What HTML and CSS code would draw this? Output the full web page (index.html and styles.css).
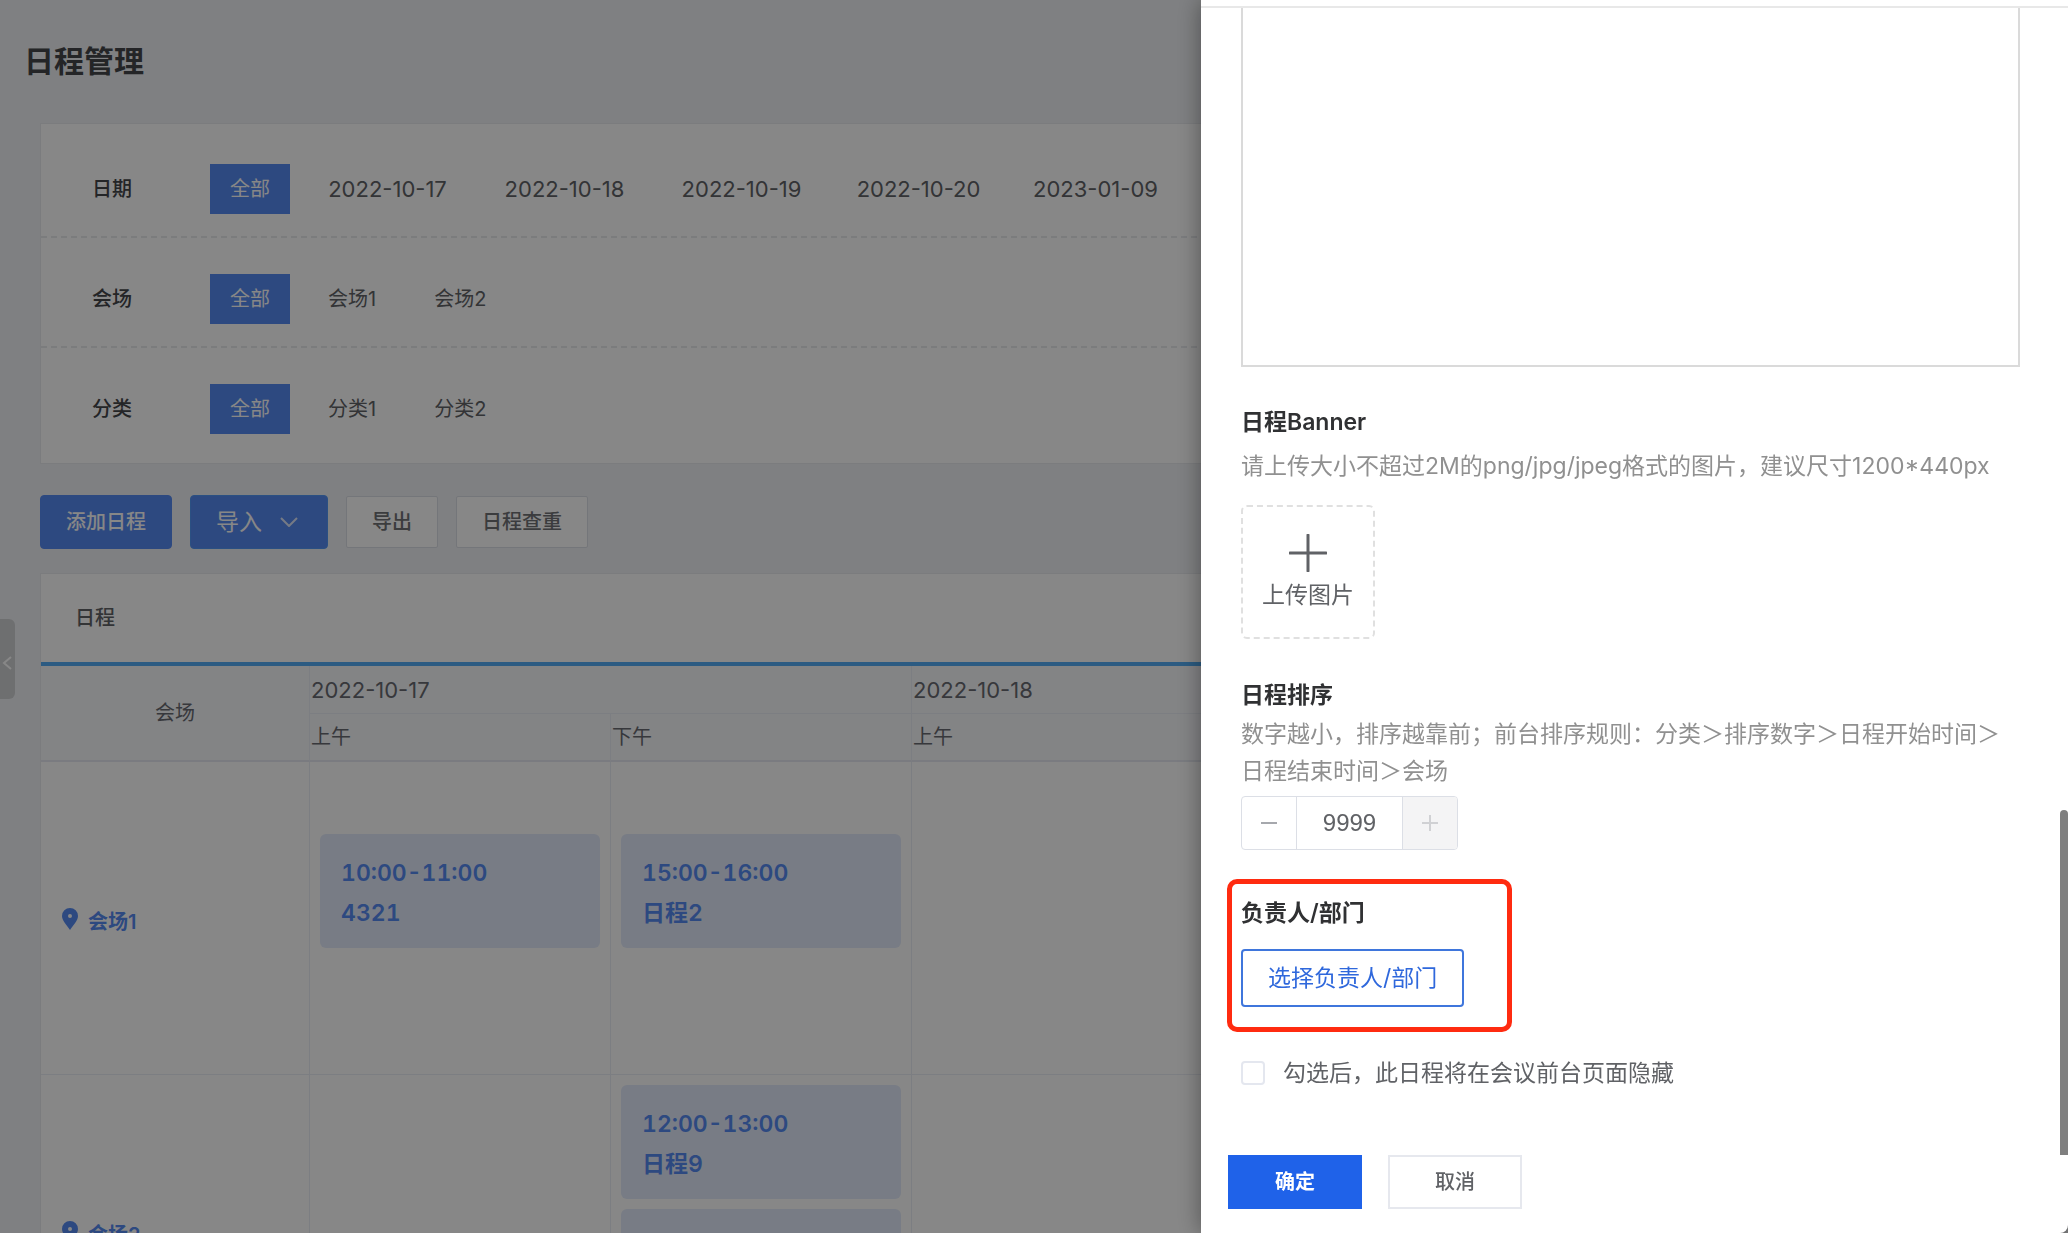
FILE: index.html
```html
<!DOCTYPE html>
<html lang="zh-CN">
<head>
<meta charset="utf-8">
<meta name="viewport" content="width=device-width, initial-scale=1">
<title>日程管理</title>
<link rel="stylesheet" href="styles.css">
</head>
<body>
<main class="page">
  <h1 class="page-title">日程管理</h1>

  <section class="card filters">
    <div class="filter-row">
      <span class="filter-label">日期</span>
      <div class="filter-options">
        <button class="option option-active" type="button">全部</button>
        <button class="option option-date" type="button">2022-10-17</button>
        <button class="option option-date" type="button">2022-10-18</button>
        <button class="option option-date" type="button">2022-10-19</button>
        <button class="option option-date" type="button">2022-10-20</button>
        <button class="option option-date" type="button">2023-01-09</button>
      </div>
    </div>
    <div class="filter-row">
      <span class="filter-label">会场</span>
      <div class="filter-options">
        <button class="option option-active" type="button">全部</button>
        <button class="option" type="button">会场1</button>
        <button class="option" type="button">会场2</button>
      </div>
    </div>
    <div class="filter-row">
      <span class="filter-label">分类</span>
      <div class="filter-options">
        <button class="option option-active" type="button">全部</button>
        <button class="option" type="button">分类1</button>
        <button class="option" type="button">分类2</button>
      </div>
    </div>
  </section>

  <div class="toolbar">
    <button class="tool tool-primary" type="button">添加日程</button>
    <button class="tool tool-primary tool-import" type="button">导入
      <svg class="tool-arrow" viewBox="0 0 18 10" aria-hidden="true"><path d="M1 1l8 8 8-8"/></svg>
    </button>
    <button class="tool" type="button">导出</button>
    <button class="tool" type="button">日程查重</button>
  </div>

  <section class="card schedule">
    <h2 class="schedule-title">日程</h2>
    <table class="grid">
      <colgroup>
        <col class="col-venue">
        <col class="col-half">
        <col class="col-half">
        <col>
      </colgroup>
      <thead>
        <tr>
          <th class="venue-head" rowspan="2">会场</th>
          <th class="date-head" colspan="2">2022-10-17</th>
          <th class="date-head">2022-10-18</th>
        </tr>
        <tr>
          <th>上午</th>
          <th>下午</th>
          <th>上午</th>
        </tr>
      </thead>
      <tbody>
        <tr>
          <td>
            <div class="venue">
              <svg class="pin" viewBox="0 0 16 22" aria-hidden="true"><path fill-rule="evenodd" d="M8 0a8 8 0 0 0-8 8c0 5 5 9 8 14 3-5 8-9 8-14a8 8 0 0 0-8-8zm0 6a2 2 0 1 1 0 4 2 2 0 0 1 0-4z"/></svg>
              <span>会场1</span>
            </div>
          </td>
          <td>
            <div class="events">
              <div class="event"><span>10:00-11:00</span><span>4321</span></div>
            </div>
          </td>
          <td>
            <div class="events">
              <div class="event"><span>15:00-16:00</span><span>日程2</span></div>
            </div>
          </td>
          <td></td>
        </tr>
        <tr>
          <td>
            <div class="venue">
              <svg class="pin" viewBox="0 0 16 22" aria-hidden="true"><path fill-rule="evenodd" d="M8 0a8 8 0 0 0-8 8c0 5 5 9 8 14 3-5 8-9 8-14a8 8 0 0 0-8-8zm0 6a2 2 0 1 1 0 4 2 2 0 0 1 0-4z"/></svg>
              <span>会场2</span>
            </div>
          </td>
          <td></td>
          <td>
            <div class="events">
              <div class="event"><span>12:00-13:00</span><span>日程9</span></div>
              <div class="event"></div>
            </div>
          </td>
          <td></td>
        </tr>
      </tbody>
    </table>
  </section>
</main>

<button class="side-toggle" type="button" aria-label="收起菜单">
  <svg viewBox="0 0 10 14" aria-hidden="true"><path d="M9 1L2 7l7 6"/></svg>
</button>

<div class="mask"></div>

<aside class="drawer">
  <div class="drawer-head"></div>
  <form class="drawer-body">
    <textarea class="editor" aria-label="日程详情"></textarea>

    <h3 class="field-title">日程Banner</h3>
    <p class="hint">请上传大小不超过2M的png/jpg/jpeg格式的图片，建议尺寸1200*440px</p>
    <button class="upload" type="button">
      <svg viewBox="0 0 38 38" aria-hidden="true"><path d="M19 1v36M1 19h36"/></svg>
      <span>上传图片</span>
    </button>

    <label class="field-title order-title" for="order">日程排序</label>
    <p class="hint order-hint">数字越小，排序越靠前；前台排序规则：分类＞排序数字＞日程开始时间＞<br>日程结束时间＞会场</p>
    <div class="stepper">
      <button class="step" type="button" aria-label="减少">
        <svg viewBox="0 0 16 16" aria-hidden="true"><path d="M0 8h16"/></svg>
      </button>
      <input class="step-value" id="order" type="text" value="9999">
      <button class="step" type="button" aria-label="增加" disabled>
        <svg viewBox="0 0 16 16" aria-hidden="true"><path d="M0 8h16M8 0v16"/></svg>
      </button>
    </div>

    <section class="owner">
      <h3 class="field-title owner-title">负责人/部门</h3>
      <button class="owner-button" type="button">选择负责人/部门</button>
    </section>

    <label class="hide-option">
      <input class="checkbox" type="checkbox">
      <span>勾选后，此日程将在会议前台页面隐藏</span>
    </label>
    <div class="scroll-thumb"></div>
  </form>
  <footer class="drawer-foot">
    <button class="action action-primary" type="button">确定</button>
    <button class="action" type="button">取消</button>
  </footer>
</aside>
</body>
</html>
```

FILE: styles.css
```css
* {
  box-sizing: border-box;
}

body {
  margin: 0;
  height: 100vh;
  overflow: hidden;
  background: #f0f2f5;
  color: #606266;
  font-family: Inter, "Noto Sans CJK SC", sans-serif;
  font-size: 20px;
  line-height: 30px;
}

button,
input,
textarea {
  margin: 0;
  padding: 0;
  border: 0;
  border-radius: 0;
  background: none;
  color: inherit;
  font: inherit;
}

h1,
h2,
h3,
p {
  margin: 0;
}

svg {
  display: block;
  fill: none;
  stroke: currentColor;
}

/* Schedule page */

.page {
  height: 100vh;
  overflow: hidden;
  padding: 41px 40px 0;
}

.page-title {
  margin: 0 0 42px -16px;
  color: #45464a;
  font-size: 30px;
  font-weight: 600;
  line-height: 40px;
}

.card {
  border: 1px solid #e8eaee;
  background: #fff;
}

.filters {
  padding: 4px 0 5px;
}

.filter-row {
  display: flex;
  align-items: center;
  padding: 36px 0 22px 51px;
  border-bottom: 2px dashed #e8eaed;
}

.filter-row:last-child {
  padding-bottom: 24px;
  border-bottom: 0;
}

.filter-label {
  width: 118px;
  color: #45464a;
  font-weight: 500;
}

.filter-options {
  display: flex;
  gap: 18px;
}

.option {
  padding: 10px 20px;
}

.option-date {
  width: 159px;
  padding: 10px 16px;
  font-size: 22px;
  white-space: nowrap;
}

.option-active {
  background: #568af1;
  color: #fff;
}

.toolbar {
  display: flex;
  align-items: center;
  gap: 18px;
  margin: 31px 0 24px;
}

.tool {
  padding: 10px 25px;
  border: 1px solid #dcdfe6;
  border-radius: 2px;
  background: #fff;
  color: #707276;
  font-weight: 500;
}

.tool-primary {
  padding: 11px 25px;
  border-color: #568af1;
  border-radius: 4px;
  background: #568af1;
  color: #fff;
}

.tool-import {
  display: flex;
  align-items: center;
  gap: 18px;
  padding-right: 29px;
  border-color: #5297f5;
  font-size: 23px;
  font-weight: 400;
}

.tool-arrow {
  width: 18px;
  height: 10px;
  stroke-width: 2;
  opacity: 0.8;
}

.schedule-title {
  padding: 29px 34px;
  border-bottom: 4px solid #53adf5;
  font-size: 20px;
  font-weight: 500;
}

.grid {
  width: 100%;
  table-layout: fixed;
  border-collapse: separate;
  border-spacing: 0;
}

.col-venue {
  width: 269px;
}

.col-half {
  width: 301px;
}

.grid th,
.grid td {
  padding: 0;
  border-right: 1px solid #ebeef5;
  border-bottom: 1px solid #ebeef5;
}

.grid th {
  height: 48px;
  padding: 0 1px;
  background: #f8f9fc;
  color: #696b71;
  font-weight: 400;
  text-align: left;
}

.grid .date-head {
  font-size: 22px;
}

.grid thead tr:last-child th,
.grid .venue-head {
  border-bottom: 2px solid #e6e9f1;
}

.grid .venue-head {
  text-align: center;
}

.grid td {
  height: 313px;
}

.venue {
  display: flex;
  align-items: center;
  gap: 10px;
  padding: 8px 0 0 21px;
  color: #568af1;
  font-weight: 600;
}

.pin {
  width: 16px;
  height: 22px;
  margin-bottom: 6px;
  fill: currentColor;
  stroke: none;
}

.events {
  display: flex;
  flex-direction: column;
  gap: 10px;
  padding: 0 10px 54px;
}

.event {
  display: flex;
  flex-direction: column;
  height: 114px;
  padding: 19px 21px;
  border-radius: 6px;
  background: #e3ebfb;
  color: #568af1;
  font-size: 23px;
  font-variant-numeric: tabular-nums;
  font-weight: 600;
  line-height: 40px;
}

.side-toggle {
  position: fixed;
  top: 619px;
  left: 0;
  display: flex;
  align-items: center;
  width: 15px;
  height: 80px;
  padding: 8px 2px 0;
  border-radius: 0 6px 6px 0;
  background: #d0d1d4;
  color: #fff;
}

.side-toggle svg {
  width: 10px;
  height: 14px;
  stroke-width: 2;
}

.mask {
  position: fixed;
  inset: 0;
  background: rgba(0, 0, 0, 0.47);
}

/* Edit drawer */

.drawer {
  position: fixed;
  top: 0;
  right: 0;
  bottom: 0;
  display: flex;
  flex-direction: column;
  width: 867px;
  max-width: 100%;
  border-bottom-right-radius: 8px;
  background: #fff;
  box-shadow: 0 0 24px rgba(0, 0, 0, 0.4);
  font-size: 23px;
  line-height: 36px;
}

.drawer-head {
  flex: none;
  height: 8px;
  border-bottom: 2px solid #e8e8e8;
}

.drawer-body {
  position: relative;
  flex: 1;
  min-height: 0;
  overflow: hidden;
  padding: 0 48px 0 40px;
}

.editor {
  display: block;
  width: 100%;
  height: 359px;
  border: 2px solid #dadada;
  border-top: 0;
  resize: none;
}

.field-title {
  display: block;
  margin-top: 37px;
  color: #303133;
  font-size: 23px;
  font-weight: 600;
}

.hint {
  margin-top: 8px;
  color: #909090;
  line-height: 37px;
}

.upload {
  display: flex;
  flex-direction: column;
  align-items: center;
  gap: 5px;
  width: 134px;
  height: 134px;
  margin-top: 20px;
  padding-top: 27px;
  border: 2px dashed #e0e0e0;
  border-radius: 6px;
}

.upload svg {
  width: 38px;
  height: 38px;
  stroke-width: 3;
  stroke-linecap: round;
}

.order-title {
  margin-top: 38px;
}

.order-hint {
  margin-top: 3px;
}

.stepper {
  display: flex;
  width: 217px;
  height: 54px;
  margin-top: 6px;
  border: 1px solid #dcdfe6;
  border-radius: 4px;
  overflow: hidden;
}

.step {
  display: flex;
  align-items: center;
  justify-content: center;
  width: 54px;
  color: #a6a8ad;
}

.step:disabled {
  background: #f4f4f5;
  color: #d0d1d4;
}

.step svg {
  width: 16px;
  height: 16px;
  stroke-width: 2;
}

.step-value {
  flex: 1;
  min-width: 0;
  border: solid #dcdfe6;
  border-width: 0 1px;
  font-family: "Liberation Sans", sans-serif;
  font-size: 24px;
  text-align: center;
}

.owner {
  width: fit-content;
  margin: 29px 0 23px -14px;
  padding: 11px 43px 20px 9px;
  border: 5px solid #ff2b10;
  border-radius: 10px;
}

.owner-title {
  margin: 0 0 18px;
}

.owner-button {
  padding: 9px 25px;
  border: 2px solid #3f76dc;
  border-radius: 4px;
  color: #2f68dc;
}

.hide-option {
  display: flex;
  align-items: center;
  gap: 18px;
}

.checkbox {
  width: 24px;
  height: 24px;
  border: 2px solid #e4e7ef;
  border-radius: 4px;
  appearance: none;
}

.scroll-thumb {
  position: absolute;
  right: 0;
  bottom: 0;
  width: 8px;
  height: 345px;
  border-radius: 4px 4px 0 0;
  background: #7f7f7f;
}

.drawer-foot {
  display: flex;
  flex: none;
  gap: 26px;
  padding: 0 27px 24px;
}

.action {
  width: 134px;
  height: 54px;
  border: 2px solid #e6e8ee;
  font-size: 20px;
  font-weight: 500;
}

.action-primary {
  border-color: #1f62e9;
  background: #1f62e9;
  color: #fff;
  font-weight: 600;
}
```
